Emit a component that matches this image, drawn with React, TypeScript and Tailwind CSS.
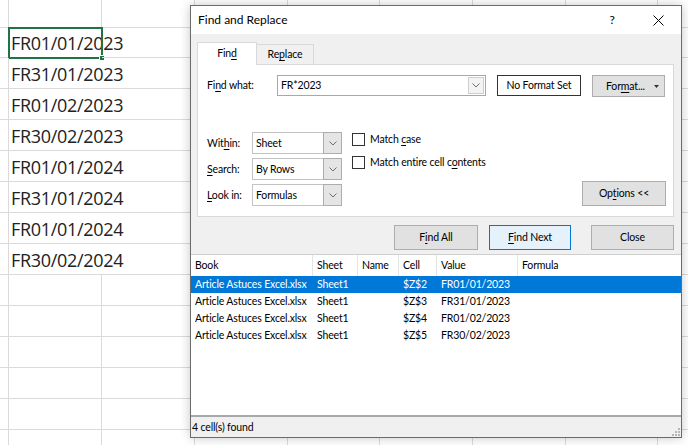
import React from "react";

const U = ({ children }: { children: React.ReactNode }) => (
  <span className="underline decoration-1 underline-offset-[2px]">{children}</span>
);

function Chevron() {
  return (
    <svg width="8" height="5" viewBox="0 0 8 5" fill="none">
      <polyline points="0.5,0.5 4,4 7.5,0.5" stroke="#6d6d6d" strokeWidth="1" />
    </svg>
  );
}

function Select({ value }: { value: string }) {
  return (
    <div className="flex h-[22px] w-[90px] border border-[#c3c3c3] bg-white">
      <div className="flex flex-1 items-center pl-[3px] pt-px">{value}</div>
      <div className="-my-px -mr-px flex w-[19px] items-center justify-center border border-[#adadad] bg-[#e5e5e5]">
        <Chevron />
      </div>
    </div>
  );
}

function Check({ children }: { children: React.ReactNode }) {
  return (
    <div className="flex h-[14px] items-center">
      <div className="h-[13px] w-[13px] border border-[#333] bg-white" />
      <span className="ml-[5px] pt-px">{children}</span>
    </div>
  );
}

const rowH = [
  "h-[28px]",
  "h-[30px]",
  "h-[31px]",
  "h-[31px]",
  "h-[31px]",
  "h-[31px]",
  "h-[31px]",
  "h-[31px]",
  "h-[31px]",
  "h-[31px]",
  "h-[31px]",
  "h-[31px]",
  "h-[31px]",
  "h-[31px]",
  "h-[31px]",
];
const colW = [
  "w-[9px]",
  "w-[93px]",
  "w-[93px]",
  "w-[93px]",
  "w-[92px]",
  "w-[93px]",
  "w-[93px]",
  "w-[92px]",
  "w-[40px]",
];
const values = [
  "FR01/01/2023",
  "FR31/01/2023",
  "FR01/02/2023",
  "FR30/02/2023",
  "FR01/01/2024",
  "FR31/01/2024",
  "FR01/01/2024",
  "FR30/02/2024",
];

const results = [
  { cell: "$Z$2", value: "FR01/01/2023" },
  { cell: "$Z$3", value: "FR31/01/2023" },
  { cell: "$Z$4", value: "FR01/02/2023" },
  { cell: "$Z$5", value: "FR30/02/2023" },
];

function Sheet() {
  return (
    <div className="flex flex-col">
      {rowH.map((h, r) => (
        <div key={r} className={`flex ${h}`}>
          {colW.map((w, c) => {
            const hasText = c === 1 && r >= 1 && r <= 8;
            return (
              <div
                key={c}
                className={`relative shrink-0 border-b border-[#dadada] ${w} ${h} ${hasText ? "" : "border-r"}`}
              >
                {hasText && (
                  <div className="absolute inset-0 flex items-end pb-[5px] pl-[2px]">
                    <span className="whitespace-nowrap font-['Open_Sans',sans-serif] text-[18px] leading-none tracking-[-0.3px] text-[#222]">
                      {values[r - 1]}
                    </span>
                  </div>
                )}
                {c === 1 && r === 1 && (
                  <div className="absolute left-[-1px] top-[-1px] h-[32px] w-[95px] border-2 border-[#217346]">
                    <div className="absolute bottom-[-4px] right-[-4px] h-[6px] w-[6px] border border-white bg-[#217346]" />
                  </div>
                )}
              </div>
            );
          })}
        </div>
      ))}
    </div>
  );
}

function Btn({
  children,
  className,
}: {
  children: React.ReactNode;
  className: string;
}) {
  return (
    <div
      className={`flex h-[25px] items-center justify-center border pt-px ${className}`}
    >
      {children}
    </div>
  );
}

export default function App() {
  return (
    <div className="relative h-[445px] w-[688px] overflow-hidden bg-white">
      <Sheet />
      <div className="absolute left-[190px] top-[5px] flex h-[433px] w-[492px] flex-col border border-[#6b6b6b] bg-[#f0f0f0] font-['Lato',sans-serif] text-[10.5px] tracking-[-0.15px] text-black shadow-[0_0_10px_rgba(0,0,0,0.22)]">
        {/* title bar */}
        <div className="flex h-[28px] shrink-0 items-center justify-between bg-white">
          <span className="pl-[7px] text-[12px] tracking-normal">Find and Replace</span>
          <div className="flex h-full">
            <div className="flex w-[46px] items-center justify-center text-[12px]">?</div>
            <div className="flex w-[46px] items-center justify-center">
              <svg width="11" height="11" viewBox="0 0 11 11">
                <line x1="0.5" y1="0.5" x2="10.5" y2="10.5" stroke="#000" strokeWidth="1" />
                <line x1="10.5" y1="0.5" x2="0.5" y2="10.5" stroke="#000" strokeWidth="1" />
              </svg>
            </div>
          </div>
        </div>

        {/* body */}
        <div className="flex shrink-0 flex-col pl-[6px] pr-[7px] pt-[8px]">
          <div className="flex h-[22px] items-end">
            <div className="relative z-10 -mb-px flex h-[23px] w-[60px] items-center justify-center border border-b-0 border-[#d9d9d9] bg-white">
              Fin<U>d</U>
            </div>
            <div className="flex h-[20px] w-[57px] items-center justify-center border border-b-0 border-l-0 border-[#d9d9d9] bg-[#f0f0f0]">
              Re<U>p</U>lace
            </div>
          </div>
          <div className="flex h-[153px] flex-col border border-[#d9d9d9] bg-white pl-[9px] pr-[7px] pt-[10px]">
            <div className="flex h-[22px] items-start">
              <div className="flex h-[21px] w-[70px] items-center pt-px">
                <span>
                  Fi<U>n</U>d what:
                </span>
              </div>
              <div className="flex h-[21px] w-[209px] border border-[#a8a8a8] bg-white">
                <div className="flex flex-1 items-center pl-[3px] pt-px">FR*2023</div>
                <div className="my-px mr-px flex w-[16px] items-center justify-center border border-[#cfcfcf] bg-[#f3f3f3]">
                  <Chevron />
                </div>
              </div>
              <div className="ml-[11px] flex h-[21px] w-[84px] items-center justify-center border border-[#333] bg-white pt-px">
                No Format Set
              </div>
              <div className="ml-[11px] flex h-[22px] w-[73px] items-center border border-[#adadad] bg-[#e1e1e1] pl-[13px]">
                <span className="pt-px">
                  For<U>m</U>at...
                </span>
                <svg className="ml-[9px]" width="5" height="3" viewBox="0 0 5 3">
                  <polygon points="0,0 5,0 2.5,3" fill="#333" />
                </svg>
              </div>
            </div>

            <div className="mt-[35px] flex">
              <div className="flex flex-col gap-[4px]">
                <div className="flex items-center">
                  <span className="w-[45px] pt-px">
                    Wit<U>h</U>in:
                  </span>
                  <Select value="Sheet" />
                </div>
                <div className="flex items-center">
                  <span className="w-[45px] pt-px">
                    <U>S</U>earch:
                  </span>
                  <Select value="By Rows" />
                </div>
                <div className="flex items-center">
                  <span className="w-[45px] pt-px">
                    <U>L</U>ook in:
                  </span>
                  <Select value="Formulas" />
                </div>
              </div>
              <div className="ml-[10px] flex flex-col gap-[9px]">
                <Check>
                  Match <U>c</U>ase
                </Check>
                <Check>
                  Match entire cell c<U>o</U>ntents
                </Check>
              </div>
              <div className="ml-auto flex items-end">
                <Btn className="w-[84px] border-[#adadad] bg-[#e1e1e1]">
                  <span>
                    Op<U>t</U>ions &lt;&lt;
                  </span>
                </Btn>
              </div>
            </div>
          </div>

          <div className="mt-[8px] flex justify-end">
            <Btn className="w-[84px] border-[#adadad] bg-[#e1e1e1]">
              <span>
                F<U>i</U>nd All
              </span>
            </Btn>
            <Btn className="ml-[11px] w-[82px] border-[#0078d7] bg-[#e5f1fb]">
              <span>
                <U>F</U>ind Next
              </span>
            </Btn>
            <Btn className="ml-[20px] w-[83px] border-[#adadad] bg-[#e1e1e1]">
              <span>Close</span>
            </Btn>
          </div>
        </div>

        {/* results list */}
        <div className="mt-[4px] flex h-[163px] shrink-0 flex-col border-b-2 border-t border-b-[#a8a8a8] border-t-[#cfcfcf] bg-white">
          <div className="flex h-[21px] shrink-0">
            <div className="flex w-[122px] items-center border-r border-[#e5e5e5] pl-[4px] pt-px">Book</div>
            <div className="flex w-[45px] items-center border-r border-[#e5e5e5] pl-[4px] pt-px">Sheet</div>
            <div className="flex w-[41px] items-center border-r border-[#e5e5e5] pl-[4px] pt-px">Name</div>
            <div className="flex w-[38px] items-center border-r border-[#e5e5e5] pl-[4px] pt-px">Cell</div>
            <div className="flex w-[81px] items-center border-r border-[#e5e5e5] pl-[4px] pt-px">Value</div>
            <div className="flex flex-1 items-center pl-[4px] pt-px">Formula</div>
          </div>
          {results.map((r, i) => (
            <div
              key={i}
              className={`flex h-[17px] shrink-0 ${i === 0 ? "bg-[#0078d7] text-white" : "text-black"}`}
            >
              <div className="flex w-[122px] items-center whitespace-nowrap pl-[4px] pt-px">
                Article Astuces Excel.xlsx
              </div>
              <div className="flex w-[45px] items-center pl-[4px] pt-px">Sheet1</div>
              <div className="flex w-[41px] items-center pl-[4px]" />
              <div className="flex w-[38px] items-center pl-[4px] pt-px">{r.cell}</div>
              <div className="flex w-[81px] items-center pl-[4px] pt-px">{r.value}</div>
              <div className="flex-1" />
            </div>
          ))}
        </div>

        {/* status bar */}
        <div className="relative flex h-[20px] shrink-0 items-center pl-[1px] pt-[2px]">
          <span>4 cell(s) found</span>
          <svg className="absolute bottom-[1px] right-[1px]" width="10" height="10" viewBox="0 0 10 10">
            <rect x="8" y="2" width="2" height="2" fill="#b5b5b5" />
            <rect x="8" y="5" width="2" height="2" fill="#b5b5b5" />
            <rect x="5" y="5" width="2" height="2" fill="#b5b5b5" />
            <rect x="8" y="8" width="2" height="2" fill="#b5b5b5" />
            <rect x="5" y="8" width="2" height="2" fill="#b5b5b5" />
            <rect x="2" y="8" width="2" height="2" fill="#b5b5b5" />
          </svg>
        </div>
      </div>
    </div>
  );
}
